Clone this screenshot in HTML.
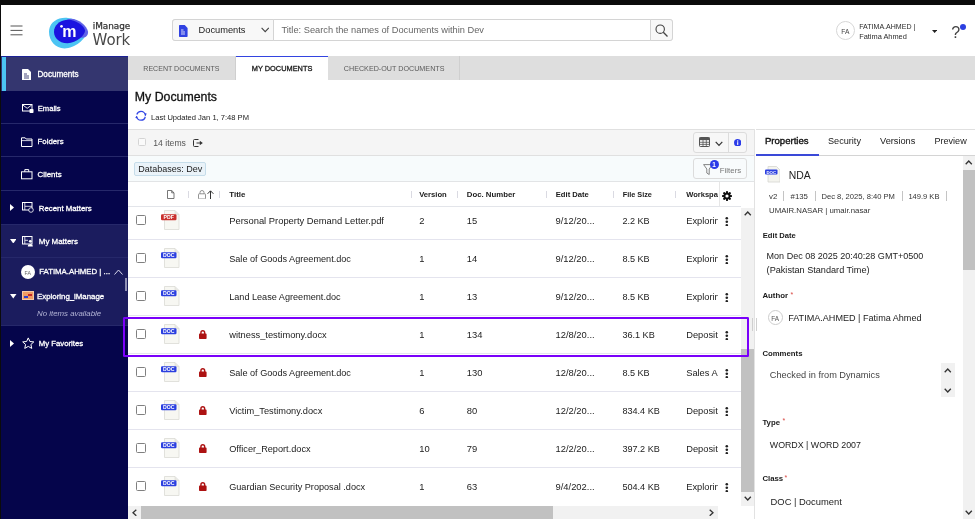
<!DOCTYPE html>
<html lang="en">
<head>
<meta charset="utf-8">
<title>iManage Work - My Documents</title>
<style>
*{box-sizing:border-box;margin:0;padding:0}
html,body{width:975px;height:519px;overflow:hidden;background:#fff;font-family:"Liberation Sans","DejaVu Sans",sans-serif;color:#222;font-size:9px}
.a{position:absolute}
.t{position:absolute;white-space:nowrap;line-height:14px;height:14px}
.sb{-webkit-text-stroke:.3px #fff}
.sk{-webkit-text-stroke:.3px #222}
.cb{position:absolute;left:136px;width:10px;height:10px;border:1px solid #808080;border-radius:1.5px;background:#fff}
.hl{position:absolute;left:128px;width:613px;height:1px;background:#e4e4ee}
</style>
</head>
<body>
<div id="app" style="position:absolute;left:0;top:0;width:975px;height:519px;will-change:transform">
<div class="a" style="left:0px;top:0px;width:975px;height:4.7px;background:#0b0b0b"></div>
<svg class="a" style="left:10px;top:25px" width="13" height="11" viewBox="0 0 13 11"><path d="M.5 1H12.500M.5 5.400H12.500M.5 9.800H12.500" stroke="#555" stroke-width="1" fill="none"/></svg>
<svg class="a" style="left:48px;top:16px" width="42" height="34" viewBox="0 0 42 34"><path d="M1.200 13.500C2.500 5.500 11 .8 20 2C28 3 37.500 8.500 38.500 15C39.500 22 27 32.500 16.500 32.500C6.500 32.500 -.2 23 1.200 13.500Z" fill="#4cc4f3"/>
<path d="M19 3.500C27 0 39 9 40 15.500C40.600 19.500 37 22.500 33 21.500Z" fill="#5f62e8"/>
<path d="M6.300 13.200C8.300 6.200 16 2.400 24 4.200C30.500 5.800 36.600 10.500 37 14.600C37.400 19 28.500 27.300 19.500 27.300C10.500 27.300 4.500 20.500 6.300 13.200Z" fill="#1b14e0"/>
<text x="14.300" y="21" font-family="Liberation Sans, sans-serif" font-weight="bold" font-size="16" fill="#fff">m</text>
<circle cx="13.500" cy="10.300" r="1.350" fill="#fff"/></svg>
<div class="t" style="left:92.800px;top:19px;font-size:8.900px;color:#333;font-family:'DejaVu Sans','Liberation Sans',sans-serif;-webkit-text-stroke:.25px #333;letter-spacing:-.05px">iManage</div>
<div class="t" style="left:92.600px;top:30px;height:20px;line-height:20px;font-size:15px;color:#474747;font-family:'DejaVu Sans','Liberation Sans',sans-serif;letter-spacing:-.15px">Work</div>
<div class="a" style="left:172px;top:19px;width:501px;height:22px;border:1px solid #d4d4d4;border-radius:3px;background:#fff"></div>
<div class="a" style="left:172px;top:19px;width:102px;height:22px;border:1px solid #d4d4d4;border-radius:3px 0 0 3px;background:#f8f8f8"></div>
<svg class="a" style="left:179.2px;top:25px" width="8.6" height="12" viewBox="0 0 8.6 12"><path d="M0 1C0 .4.4 0 1 0H5.700L8.600 2.900V11C8.600 11.600 8.200 12 7.600 12H1C.4 12 0 11.600 0 11Z" fill="#3142e2"/><path d="M2 5H4.500M2 7H6M2 9H6" stroke="#fff" stroke-width=".8"/></svg>
<div class="t " style="left:198.5px;top:23px;font-size:9.3px;color:#222;">Documents</div>
<svg class="a" style="left:260.8px;top:27.4px" width="8.4" height="5.6" viewBox="0 0 8.400 5.600"><path d="M.6 .8L4.200 4.600L7.800 .8" stroke="#444" stroke-width="1.100" fill="none"/></svg>
<div class="t " style="left:281.4px;top:23px;font-size:9.27px;color:#666;">Title: Search the names of Documents within Dev</div>
<div class="a" style="left:650px;top:19px;width:23px;height:22px;border:1px solid #d4d4d4;border-radius:0 3px 3px 0;background:#f8f8f8"></div>
<svg class="a" style="left:655px;top:24px" width="13" height="13" viewBox="0 0 13 13"><circle cx="5.200" cy="5.200" r="4.200" stroke="#444" stroke-width="1.100" fill="none"/><path d="M8.300 8.300L12.500 12.500" stroke="#444" stroke-width="1.300"/></svg>
<div class="a" style="left:835.7px;top:20.5px;width:19.8px;height:19.8px;border:1px solid #d6d6d6;border-radius:50%"></div>
<div class="t " style="left:841.3px;top:25px;font-size:6.6px;color:#444;">FA</div>
<div class="t " style="left:859.2px;top:20px;font-size:7.05px;color:#2a2a2a;">FATIMA.AHMED |</div>
<div class="t " style="left:859.2px;top:30px;font-size:7.4px;color:#2a2a2a;">Fatima Ahmed</div>
<svg class="a" style="left:931.8px;top:30.2px" width="5.2" height="3" viewBox="0 0 5.200 3"><path d="M0 0H5.200L2.600 3Z" fill="#222"/></svg>
<div class="t" style="left:951.200px;top:23px;height:20px;line-height:20px;font-size:16px;color:#444">?</div>
<div class="a" style="left:960px;top:24px;width:6px;height:6px;border-radius:50%;background:#2b3fe0"></div>
<div class="a" style="left:0px;top:56px;width:128px;height:463px;background:#05054b"></div>
<div class="a" style="left:0px;top:55.5px;width:128px;height:1.5px;background:#1c2296"></div>
<div class="a" style="left:0px;top:57px;width:128px;height:33.5px;background:#34366f"></div>
<div class="a" style="left:1.5px;top:57px;width:4px;height:33.5px;background:#4cc4f2"></div>
<div class="a" style="left:0px;top:223.5px;width:128px;height:101px;background:#1b1c5e"></div>
<div class="a" style="left:0px;top:122.8px;width:128px;height:1px;background:#26286a"></div>
<div class="a" style="left:0px;top:156px;width:128px;height:1px;background:#26286a"></div>
<div class="a" style="left:0px;top:190px;width:128px;height:1px;background:#26286a"></div>
<div class="a" style="left:0px;top:223.5px;width:128px;height:1px;background:#26286a"></div>
<div class="a" style="left:0px;top:257px;width:128px;height:1px;background:#26286a"></div>
<div class="a" style="left:0px;top:324.5px;width:128px;height:1px;background:#26286a"></div>
<div class="a" style="left:0px;top:0px;width:1.2px;height:519px;background:#0b0b0b"></div>
<svg class="a" style="left:21.5px;top:68.5px" width="9" height="11.5" viewBox="0 0 9 11.500"><path d="M0 1C0 .4.4 0 1 0H6L9 3V10.500C9 11.100 8.600 11.500 8 11.500H1C.4 11.500 0 11.100 0 10.500Z" fill="#fff"/><path d="M2 5H5M2 7H7M2 9H7" stroke="#34366f" stroke-width=".9"/></svg>
<div class="t sb" style="left:37.5px;top:68px;font-size:8.15px;color:#fff;">Documents</div>
<svg class="a" style="left:22px;top:104px" width="12" height="9" viewBox="0 0 12 9"><rect x=".5" y=".5" width="9.500" height="6.500" fill="none" stroke="#fff" stroke-width="1"/><path d="M.8 1L5.200 4.300L9.700 1" stroke="#fff" stroke-width=".9" fill="none"/><rect x="7.500" y="5" width="4" height="4" rx=".8" fill="#fff"/></svg>
<div class="t sb" style="left:37.8px;top:102px;font-size:7.6px;color:#fff;">Emails</div>
<svg class="a" style="left:21px;top:136.5px" width="12" height="10" viewBox="0 0 12 10"><path d="M.5 .8H4.200L5.200 2H11V9.500H.5Z" fill="none" stroke="#fff" stroke-width="1" stroke-linejoin="round"/><path d="M.5 3.600H11" stroke="#fff" stroke-width=".8"/></svg>
<div class="t sb" style="left:37.6px;top:135px;font-size:7.8px;color:#fff;">Folders</div>
<svg class="a" style="left:21px;top:169px" width="12" height="10.5" viewBox="0 0 12 10.5"><rect x=".5" y="2.800" width="10.500" height="7" fill="none" stroke="#fff" stroke-width="1"/><path d="M3.800 2.800V.6H7.700V2.800" fill="none" stroke="#fff" stroke-width="1"/></svg>
<div class="t sb" style="left:37.6px;top:168px;font-size:7.85px;color:#fff;">Clients</div>
<svg class="a" style="left:10.4px;top:204px" width="4" height="7" viewBox="0 0 4 7"><path d="M0 0L4 3.500L0 7Z" fill="#fff"/></svg>
<svg class="a" style="left:21.8px;top:201.5px" width="12" height="11" viewBox="0 0 12 11"><rect x=".5" y=".5" width="9.500" height="7.500" fill="none" stroke="#fff" stroke-width="1"/><path d="M2.800 .5V8M2.800 4.300H10" stroke="#fff" stroke-width=".8"/><circle cx="9" cy="8" r="2.300" fill="#05054b" stroke="#fff" stroke-width=".8"/></svg>
<div class="t sb" style="left:38.8px;top:202px;font-size:7.82px;color:#fff;">Recent Matters</div>
<svg class="a" style="left:9.5px;top:238.5px" width="6.5" height="4.5" viewBox="0 0 6.500 4.500"><path d="M0 0H6.500L3.250 4.500Z" fill="#fff"/></svg>
<svg class="a" style="left:21.8px;top:235.5px" width="12" height="11" viewBox="0 0 12 11"><rect x=".5" y=".5" width="9.500" height="7.500" fill="none" stroke="#fff" stroke-width="1"/><path d="M2.800 .5V8M2.800 4.300H6" stroke="#fff" stroke-width=".8"/><circle cx="8.300" cy="5.300" r="1.400" fill="#fff"/><path d="M5.800 10.500C5.800 7.300 10.800 7.300 10.800 10.500Z" fill="#fff"/></svg>
<div class="t sb" style="left:38.8px;top:235px;font-size:7.93px;color:#fff;">My Matters</div>
<div class="a" style="left:20.8px;top:265px;width:14px;height:14px;border-radius:50%;background:#fff"></div>
<div class="t " style="left:24.6px;top:266px;font-size:5.2px;color:#666;">FA</div>
<div class="t sb" style="left:39.2px;top:265px;font-size:7.82px;color:#fff;">FATIMA.AHMED | ...</div>
<svg class="a" style="left:113.5px;top:268.5px" width="9" height="6" viewBox="0 0 9 6"><path d="M.5 5.500L4.500 1L8.500 5.500" stroke="#d8d8ee" stroke-width="1" fill="none"/></svg>
<div class="a" style="left:124.8px;top:277.5px;width:2.2px;height:13px;background:#8f90b4"></div>
<svg class="a" style="left:10px;top:294px" width="6.5" height="4.5" viewBox="0 0 6.500 4.500"><path d="M0 0H6.500L3.250 4.500Z" fill="#fff"/></svg>
<div class="a" style="left:21.8px;top:291px;width:11.8px;height:9.3px;background:#ee9b63;border:1px solid #f6c9a4"></div>
<div class="a" style="left:24px;top:295.5px;width:3.5px;height:2.5px;background:#2a3fd0"></div>
<div class="a" style="left:27.5px;top:294px;width:4px;height:2px;background:#c62828"></div>
<div class="t sb" style="left:37.1px;top:290px;font-size:7.83px;color:#fff;">Exploring_iManage</div>
<div class="t " style="left:37.1px;top:307px;font-size:7.85px;color:#b4b5d6;font-style:italic">No items available</div>
<svg class="a" style="left:10.4px;top:339.5px" width="4" height="7" viewBox="0 0 4 7"><path d="M0 0L4 3.500L0 7Z" fill="#fff"/></svg>
<svg class="a" style="left:21.5px;top:336.5px" width="12.5" height="12.5" viewBox="0 0 12.500 12.500"><path d="M6.250 .9L7.900 4.500L11.800 4.900L8.900 7.500L9.750 11.400L6.250 9.400L2.750 11.400L3.600 7.500L.7 4.900L4.600 4.500Z" fill="none" stroke="#fff" stroke-width="1" stroke-linejoin="round"/></svg>
<div class="t sb" style="left:38.8px;top:337px;font-size:7.76px;color:#fff;">My Favorites</div>
<div class="a" style="left:128px;top:55.5px;width:847px;height:24.5px;background:#dedede"></div>
<div class="a" style="left:235px;top:56px;width:1px;height:24px;background:#cfcfcf"></div>
<div class="a" style="left:459px;top:56px;width:1px;height:24px;background:#cfcfcf"></div>
<div class="a" style="left:235.5px;top:55.5px;width:92.5px;height:25px;background:#fff;border-top:1.700px solid #3344e0"></div>
<div class="t " style="left:143.3px;top:62px;font-size:7.06px;color:#5a5a5a;">RECENT DOCUMENTS</div>
<div class="t sk" style="left:251.8px;top:62px;font-size:7.39px;color:#111;">MY DOCUMENTS</div>
<div class="t " style="left:343.8px;top:62px;font-size:7.18px;color:#5a5a5a;">CHECKED-OUT DOCUMENTS</div>
<div class="t " style="left:134.8px;top:90px;font-size:12.34px;color:#111;-webkit-text-stroke:.3px #111">My Documents</div>
<svg class="a" style="left:135px;top:110px" width="12" height="12" viewBox="0 0 12 12"><circle cx="6" cy="5.800" r="4.400" fill="none" stroke="#3347e6" stroke-width="1.200" stroke-dasharray="12 1.820" stroke-dashoffset="-1"/><path d="M9.200 3.300L11.700 3.600L10.600 5.900Z M2.800 8.300L.3 8L1.400 5.700Z" fill="#2b3fe0"/></svg>
<div class="t " style="left:151px;top:111px;font-size:7.57px;color:#222;">Last Updated Jan 1, 7:48 PM</div>
<div class="a" style="left:128px;top:128.5px;width:627px;height:27.5px;background:#f5f5f5;border-top:1px solid #e0e0e0;border-bottom:1px solid #e0e0e0"></div>
<div class="a" style="left:138px;top:138px;width:8px;height:8px;border:1px solid #d4d4d4;border-radius:1.500px;background:#fafafa"></div>
<div class="t " style="left:153.3px;top:136px;font-size:8.65px;color:#555;">14 items</div>
<svg class="a" style="left:193px;top:139px" width="10" height="8" viewBox="0 0 10 8"><path d="M5.500 .5H1.500Q.5 .5 .5 1.500V6.500Q.5 7.500 1.500 7.500H5.500" stroke="#333" stroke-width="1" fill="none"/><path d="M3.500 4H8" stroke="#333" stroke-width="1"/><path d="M6.800 1.800L9.800 4L6.800 6.200Z" fill="#333"/></svg>
<div class="a" style="left:693px;top:131.6px;width:54px;height:21.6px;border:1px solid #dcdcdc;border-radius:3px;background:#f7f7f7"></div>
<div class="a" style="left:728px;top:132.5px;width:1px;height:20px;background:#dcdcdc"></div>
<svg class="a" style="left:699px;top:137.3px" width="11" height="10" viewBox="0 0 11 10"><rect x=".5" y=".5" width="10" height="9" rx=".8" fill="none" stroke="#555" stroke-width="1"/><rect x=".5" y=".5" width="10" height="2.600" fill="#555"/><path d="M.5 5.300H10.500M.5 7.400H10.500M4 3V9.500M7.300 3V9.500" stroke="#555" stroke-width=".8"/></svg>
<svg class="a" style="left:714.6px;top:141px" width="8" height="5.5" viewBox="0 0 8 5.500"><path d="M.7 .8L4 4.300L7.300 .8" stroke="#333" stroke-width="1.200" fill="none"/></svg>
<svg class="a" style="left:733.6px;top:138.5px" width="7.4" height="7.4" viewBox="0 0 7.400 7.400"><circle cx="3.700" cy="3.700" r="3.700" fill="#2b3be8"/><rect x="3.150" y="3.200" width="1.100" height="2.700" fill="#fff"/><circle cx="3.700" cy="2" r=".7" fill="#fff"/></svg>
<div class="a" style="left:128px;top:156px;width:627px;height:25.5px;background:#f7fbfc;border-bottom:1px solid #e2e4e6"></div>
<div class="a" style="left:134.3px;top:161.7px;width:71.4px;height:14.3px;border:1px solid #c6ddea;border-radius:2px;background:#eaf3f9"></div>
<div class="t " style="left:138.3px;top:162px;font-size:9px;color:#222;">Databases: Dev</div>
<div class="a" style="left:693px;top:157.6px;width:54px;height:21.4px;border:1px solid #dcdcdc;border-radius:3px;background:#f8fbfc"></div>
<svg class="a" style="left:702.5px;top:164px" width="10" height="11.5" viewBox="0 0 10 11.500"><path d="M.6 .6H9.400L6.200 5V10.500L3.800 9V5Z" fill="none" stroke="#777" stroke-width=".9" stroke-linejoin="round"/></svg>
<div class="a" style="left:709.5px;top:159.6px;width:9px;height:9px;border-radius:50%;background:#2b3be8"></div>
<div class="t " style="left:712.3px;top:158px;font-size:6.5px;color:#fff;font-weight:bold">1</div>
<div class="t " style="left:719.8px;top:164px;font-size:7.86px;color:#777;">Filters</div>
<div class="a" style="left:128px;top:205.7px;width:613px;height:1.8px;background:#e3e5ea"></div>
<svg class="a" style="left:167px;top:190px" width="7.5" height="9" viewBox="0 0 7.500 9"><path d="M.5 .5H4.700L7 2.800V8.500H.5Z M4.700 .5V2.800H7" fill="none" stroke="#555" stroke-width=".8"/></svg>
<svg class="a" style="left:198.3px;top:189.5px" width="8" height="9.5" viewBox="0 0 8 9.500"><rect x=".5" y="3.800" width="7" height="5.200" rx=".6" fill="none" stroke="#888" stroke-width=".9"/><path d="M2 3.800V2.500Q2 .5 4 .5Q6 .5 6 2.500V3.800" fill="none" stroke="#888" stroke-width=".9"/></svg>
<svg class="a" style="left:207px;top:189.5px" width="7" height="9.5" viewBox="0 0 7 9.500"><path d="M3.500 1V9.500M.6 3.800L3.500 .8L6.400 3.800" stroke="#333" stroke-width="1" fill="none"/></svg>
<div class="a" style="left:187.6px;top:191px;width:1px;height:7px;background:#dadae2"></div>
<div class="a" style="left:219.4px;top:191px;width:1px;height:7px;background:#dadae2"></div>
<div class="a" style="left:410.5px;top:191px;width:1px;height:7px;background:#dadae2"></div>
<div class="a" style="left:457px;top:191px;width:1px;height:7px;background:#dadae2"></div>
<div class="a" style="left:546px;top:191px;width:1px;height:7px;background:#dadae2"></div>
<div class="a" style="left:612.5px;top:191px;width:1px;height:7px;background:#dadae2"></div>
<div class="a" style="left:675px;top:191px;width:1px;height:7px;background:#dadae2"></div>
<div class="t " style="left:229.3px;top:188px;font-size:7.9px;color:#1a1a1a;font-weight:bold">Title</div>
<div class="t " style="left:419.2px;top:188px;font-size:7.64px;color:#1a1a1a;font-weight:bold">Version</div>
<div class="t " style="left:466.8px;top:188px;font-size:7.8px;color:#1a1a1a;font-weight:bold">Doc. Number</div>
<div class="t " style="left:555.8px;top:188px;font-size:7.61px;color:#1a1a1a;font-weight:bold">Edit Date</div>
<div class="t " style="left:622.7px;top:188px;font-size:7.3px;color:#1a1a1a;font-weight:bold">File Size</div>
<div class="t" style="left:686.200px;top:188px;font-size:7.550px;font-weight:bold;color:#1a1a1a;width:31.900px;overflow:hidden">Workspace</div>
<svg class="a" style="left:722.4px;top:190.6px" width="10" height="10" viewBox="0 0 10 10"><g fill="#111"><circle cx="5" cy="5" r="3.500"/><rect x="4" y="0" width="2" height="10" rx=".4"/><rect x="0" y="4" width="10" height="2" rx=".4"/><rect x="4" y="0" width="2" height="10" rx=".4" transform="rotate(45 5 5)"/><rect x="4" y="0" width="2" height="10" rx=".4" transform="rotate(-45 5 5)"/></g><circle cx="5" cy="5" r="1.600" fill="#fff"/></svg>
<div class="a" style="left:718.8px;top:182px;width:1px;height:24px;background:#e6e6e6"></div>
<div class="hl" style="top:239.0px"></div>
<div class="cb" style="top:215.0px"></div>
<svg class="a" style="left:161px;top:209.8px" width="18.5" height="20" viewBox="0 0 18.500 20"><path d="M3.500 .5H14L18 4.500V19.500H3.500Z" fill="#f7f7f2" stroke="#dadad4" stroke-width=".8"/><path d="M14 .5V4.500H18" fill="#e9e9e3" stroke="#dadad4" stroke-width=".6"/><rect x="0" y="4.300" width="15.500" height="6" rx="1.200" fill="#c9302c"/><text x="7.750" y="9.100" text-anchor="middle" font-family="Liberation Sans, sans-serif" font-weight="bold" font-size="5.200" fill="#fff">PDF</text></svg>
<div class="t " style="left:229.2px;top:214px;font-size:9.39px;color:#222;">Personal Property Demand Letter.pdf</div>
<div class="t " style="left:419.2px;top:214px;font-size:9.4px;color:#222;">2</div>
<div class="t " style="left:466.8px;top:214px;font-size:9.4px;color:#222;">15</div>
<div class="t " style="left:555.5px;top:214px;font-size:9.4px;color:#222;">9/12/20...</div>
<div class="t " style="left:622.4px;top:214px;font-size:9.1px;color:#222;">2.2 KB</div>
<div class="t" style="left:686.200px;top:213.5px;font-size:9.300px;width:31.600px;overflow:hidden">Explorin</div>
<svg class="a" style="left:725px;top:216.5px" width="3.6" height="9.6" viewBox="0 0 3.600 9.600"><circle cx="1.800" cy="1.300" r="1.300" fill="#222"/><circle cx="1.800" cy="4.800" r="1.300" fill="#222"/><circle cx="1.800" cy="8.300" r="1.300" fill="#222"/></svg>
<div class="hl" style="top:277.0px"></div>
<div class="cb" style="top:253.0px"></div>
<svg class="a" style="left:161px;top:247.8px" width="18.5" height="20" viewBox="0 0 18.500 20"><path d="M3.500 .5H14L18 4.500V19.500H3.500Z" fill="#f7f7f2" stroke="#dadad4" stroke-width=".8"/><path d="M14 .5V4.500H18" fill="#e9e9e3" stroke="#dadad4" stroke-width=".6"/><rect x="0" y="4.300" width="15.500" height="6" rx="1.200" fill="#2b3fe0"/><text x="7.750" y="9.100" text-anchor="middle" font-family="Liberation Sans, sans-serif" font-weight="bold" font-size="5.200" fill="#fff">DOC</text></svg>
<div class="t " style="left:229.2px;top:252px;font-size:9.13px;color:#222;">Sale of Goods Agreement.doc</div>
<div class="t " style="left:419.2px;top:252px;font-size:9.4px;color:#222;">1</div>
<div class="t " style="left:466.8px;top:252px;font-size:9.4px;color:#222;">14</div>
<div class="t " style="left:555.5px;top:252px;font-size:9.4px;color:#222;">9/12/20...</div>
<div class="t " style="left:622.4px;top:252px;font-size:9.1px;color:#222;">8.5 KB</div>
<div class="t" style="left:686.200px;top:251.5px;font-size:9.300px;width:31.600px;overflow:hidden">Explorin</div>
<svg class="a" style="left:725px;top:254.5px" width="3.6" height="9.6" viewBox="0 0 3.600 9.600"><circle cx="1.800" cy="1.300" r="1.300" fill="#222"/><circle cx="1.800" cy="4.800" r="1.300" fill="#222"/><circle cx="1.800" cy="8.300" r="1.300" fill="#222"/></svg>
<div class="hl" style="top:315.0px"></div>
<div class="cb" style="top:291.0px"></div>
<svg class="a" style="left:161px;top:285.8px" width="18.5" height="20" viewBox="0 0 18.500 20"><path d="M3.500 .5H14L18 4.500V19.500H3.500Z" fill="#f7f7f2" stroke="#dadad4" stroke-width=".8"/><path d="M14 .5V4.500H18" fill="#e9e9e3" stroke="#dadad4" stroke-width=".6"/><rect x="0" y="4.300" width="15.500" height="6" rx="1.200" fill="#2b3fe0"/><text x="7.750" y="9.100" text-anchor="middle" font-family="Liberation Sans, sans-serif" font-weight="bold" font-size="5.200" fill="#fff">DOC</text></svg>
<div class="t " style="left:229.2px;top:290px;font-size:9.12px;color:#222;">Land Lease Agreement.doc</div>
<div class="t " style="left:419.2px;top:290px;font-size:9.4px;color:#222;">1</div>
<div class="t " style="left:466.8px;top:290px;font-size:9.4px;color:#222;">13</div>
<div class="t " style="left:555.5px;top:290px;font-size:9.4px;color:#222;">9/12/20...</div>
<div class="t " style="left:622.4px;top:290px;font-size:9.1px;color:#222;">8.5 KB</div>
<div class="t" style="left:686.200px;top:289.5px;font-size:9.300px;width:31.600px;overflow:hidden">Explorin</div>
<svg class="a" style="left:725px;top:292.5px" width="3.6" height="9.6" viewBox="0 0 3.600 9.600"><circle cx="1.800" cy="1.300" r="1.300" fill="#222"/><circle cx="1.800" cy="4.800" r="1.300" fill="#222"/><circle cx="1.800" cy="8.300" r="1.300" fill="#222"/></svg>
<div class="hl" style="top:353.0px"></div>
<div class="cb" style="top:329.0px"></div>
<svg class="a" style="left:161px;top:323.8px" width="18.5" height="20" viewBox="0 0 18.500 20"><path d="M3.500 .5H14L18 4.500V19.500H3.500Z" fill="#f7f7f2" stroke="#dadad4" stroke-width=".8"/><path d="M14 .5V4.500H18" fill="#e9e9e3" stroke="#dadad4" stroke-width=".6"/><rect x="0" y="4.300" width="15.500" height="6" rx="1.200" fill="#2b3fe0"/><text x="7.750" y="9.100" text-anchor="middle" font-family="Liberation Sans, sans-serif" font-weight="bold" font-size="5.200" fill="#fff">DOC</text></svg>
<svg class="a" style="left:199px;top:329.5px" width="7.6" height="9" viewBox="0 0 7.600 9"><rect x="0" y="3.600" width="7.600" height="5.400" rx=".8" fill="#ad1212"/><path d="M1.900 4V2.900Q1.900 .8 3.800 .8Q5.700 .8 5.700 2.900V4" fill="none" stroke="#ad1212" stroke-width="1.400"/></svg>
<div class="t " style="left:229.2px;top:328px;font-size:9.3px;color:#222;">witness_testimony.docx</div>
<div class="t " style="left:419.2px;top:328px;font-size:9.4px;color:#222;">1</div>
<div class="t " style="left:466.8px;top:328px;font-size:9.4px;color:#222;">134</div>
<div class="t " style="left:555.5px;top:328px;font-size:9.4px;color:#222;">12/8/20...</div>
<div class="t " style="left:622.4px;top:328px;font-size:9.1px;color:#222;">36.1 KB</div>
<div class="t" style="left:686.200px;top:327.5px;font-size:9.300px;width:31.600px;overflow:hidden">Deposit</div>
<svg class="a" style="left:725px;top:330.5px" width="3.6" height="9.6" viewBox="0 0 3.600 9.600"><circle cx="1.800" cy="1.300" r="1.300" fill="#222"/><circle cx="1.800" cy="4.800" r="1.300" fill="#222"/><circle cx="1.800" cy="8.300" r="1.300" fill="#222"/></svg>
<div class="hl" style="top:391.0px"></div>
<div class="cb" style="top:367.0px"></div>
<svg class="a" style="left:161px;top:361.8px" width="18.5" height="20" viewBox="0 0 18.500 20"><path d="M3.500 .5H14L18 4.500V19.500H3.500Z" fill="#f7f7f2" stroke="#dadad4" stroke-width=".8"/><path d="M14 .5V4.500H18" fill="#e9e9e3" stroke="#dadad4" stroke-width=".6"/><rect x="0" y="4.300" width="15.500" height="6" rx="1.200" fill="#2b3fe0"/><text x="7.750" y="9.100" text-anchor="middle" font-family="Liberation Sans, sans-serif" font-weight="bold" font-size="5.200" fill="#fff">DOC</text></svg>
<svg class="a" style="left:199px;top:367.5px" width="7.6" height="9" viewBox="0 0 7.600 9"><rect x="0" y="3.600" width="7.600" height="5.400" rx=".8" fill="#ad1212"/><path d="M1.900 4V2.900Q1.900 .8 3.800 .8Q5.700 .8 5.700 2.900V4" fill="none" stroke="#ad1212" stroke-width="1.400"/></svg>
<div class="t " style="left:229.2px;top:366px;font-size:9.13px;color:#222;">Sale of Goods Agreement.doc</div>
<div class="t " style="left:419.2px;top:366px;font-size:9.4px;color:#222;">1</div>
<div class="t " style="left:466.8px;top:366px;font-size:9.4px;color:#222;">130</div>
<div class="t " style="left:555.5px;top:366px;font-size:9.4px;color:#222;">12/8/20...</div>
<div class="t " style="left:622.4px;top:366px;font-size:9.1px;color:#222;">8.5 KB</div>
<div class="t" style="left:686.200px;top:365.5px;font-size:9.300px;width:31.600px;overflow:hidden">Sales Ag</div>
<svg class="a" style="left:725px;top:368.5px" width="3.6" height="9.6" viewBox="0 0 3.600 9.600"><circle cx="1.800" cy="1.300" r="1.300" fill="#222"/><circle cx="1.800" cy="4.800" r="1.300" fill="#222"/><circle cx="1.800" cy="8.300" r="1.300" fill="#222"/></svg>
<div class="hl" style="top:429.0px"></div>
<div class="cb" style="top:405.0px"></div>
<svg class="a" style="left:161px;top:399.8px" width="18.5" height="20" viewBox="0 0 18.500 20"><path d="M3.500 .5H14L18 4.500V19.500H3.500Z" fill="#f7f7f2" stroke="#dadad4" stroke-width=".8"/><path d="M14 .5V4.500H18" fill="#e9e9e3" stroke="#dadad4" stroke-width=".6"/><rect x="0" y="4.300" width="15.500" height="6" rx="1.200" fill="#2b3fe0"/><text x="7.750" y="9.100" text-anchor="middle" font-family="Liberation Sans, sans-serif" font-weight="bold" font-size="5.200" fill="#fff">DOC</text></svg>
<svg class="a" style="left:199px;top:405.5px" width="7.6" height="9" viewBox="0 0 7.600 9"><rect x="0" y="3.600" width="7.600" height="5.400" rx=".8" fill="#ad1212"/><path d="M1.900 4V2.900Q1.900 .8 3.800 .8Q5.700 .8 5.700 2.900V4" fill="none" stroke="#ad1212" stroke-width="1.400"/></svg>
<div class="t " style="left:229.2px;top:404px;font-size:9.24px;color:#222;">Victim_Testimony.docx</div>
<div class="t " style="left:419.2px;top:404px;font-size:9.4px;color:#222;">6</div>
<div class="t " style="left:466.8px;top:404px;font-size:9.4px;color:#222;">80</div>
<div class="t " style="left:555.5px;top:404px;font-size:9.4px;color:#222;">12/2/20...</div>
<div class="t " style="left:622.4px;top:404px;font-size:9.1px;color:#222;">834.4 KB</div>
<div class="t" style="left:686.200px;top:403.5px;font-size:9.300px;width:31.600px;overflow:hidden">Deposit</div>
<svg class="a" style="left:725px;top:406.5px" width="3.6" height="9.6" viewBox="0 0 3.600 9.600"><circle cx="1.800" cy="1.300" r="1.300" fill="#222"/><circle cx="1.800" cy="4.800" r="1.300" fill="#222"/><circle cx="1.800" cy="8.300" r="1.300" fill="#222"/></svg>
<div class="hl" style="top:467.0px"></div>
<div class="cb" style="top:443.0px"></div>
<svg class="a" style="left:161px;top:437.8px" width="18.5" height="20" viewBox="0 0 18.500 20"><path d="M3.500 .5H14L18 4.500V19.500H3.500Z" fill="#f7f7f2" stroke="#dadad4" stroke-width=".8"/><path d="M14 .5V4.500H18" fill="#e9e9e3" stroke="#dadad4" stroke-width=".6"/><rect x="0" y="4.300" width="15.500" height="6" rx="1.200" fill="#2b3fe0"/><text x="7.750" y="9.100" text-anchor="middle" font-family="Liberation Sans, sans-serif" font-weight="bold" font-size="5.200" fill="#fff">DOC</text></svg>
<svg class="a" style="left:199px;top:443.5px" width="7.6" height="9" viewBox="0 0 7.600 9"><rect x="0" y="3.600" width="7.600" height="5.400" rx=".8" fill="#ad1212"/><path d="M1.900 4V2.900Q1.900 .8 3.800 .8Q5.700 .8 5.700 2.900V4" fill="none" stroke="#ad1212" stroke-width="1.400"/></svg>
<div class="t " style="left:229.2px;top:442px;font-size:9.18px;color:#222;">Officer_Report.docx</div>
<div class="t " style="left:419.2px;top:442px;font-size:9.4px;color:#222;">10</div>
<div class="t " style="left:466.8px;top:442px;font-size:9.4px;color:#222;">79</div>
<div class="t " style="left:555.5px;top:442px;font-size:9.4px;color:#222;">12/2/20...</div>
<div class="t " style="left:622.4px;top:442px;font-size:9.1px;color:#222;">397.2 KB</div>
<div class="t" style="left:686.200px;top:441.5px;font-size:9.300px;width:31.600px;overflow:hidden">Deposit</div>
<svg class="a" style="left:725px;top:444.5px" width="3.6" height="9.6" viewBox="0 0 3.600 9.600"><circle cx="1.800" cy="1.300" r="1.300" fill="#222"/><circle cx="1.800" cy="4.800" r="1.300" fill="#222"/><circle cx="1.800" cy="8.300" r="1.300" fill="#222"/></svg>
<div class="cb" style="top:481.0px"></div>
<svg class="a" style="left:161px;top:475.8px" width="18.5" height="20" viewBox="0 0 18.500 20"><path d="M3.500 .5H14L18 4.500V19.500H3.500Z" fill="#f7f7f2" stroke="#dadad4" stroke-width=".8"/><path d="M14 .5V4.500H18" fill="#e9e9e3" stroke="#dadad4" stroke-width=".6"/><rect x="0" y="4.300" width="15.500" height="6" rx="1.200" fill="#2b3fe0"/><text x="7.750" y="9.100" text-anchor="middle" font-family="Liberation Sans, sans-serif" font-weight="bold" font-size="5.200" fill="#fff">DOC</text></svg>
<svg class="a" style="left:199px;top:481.5px" width="7.6" height="9" viewBox="0 0 7.600 9"><rect x="0" y="3.600" width="7.600" height="5.400" rx=".8" fill="#ad1212"/><path d="M1.900 4V2.900Q1.900 .8 3.800 .8Q5.700 .8 5.700 2.900V4" fill="none" stroke="#ad1212" stroke-width="1.400"/></svg>
<div class="t " style="left:229.2px;top:480px;font-size:9.14px;color:#222;">Guardian Security Proposal .docx</div>
<div class="t " style="left:419.2px;top:480px;font-size:9.4px;color:#222;">1</div>
<div class="t " style="left:466.8px;top:480px;font-size:9.4px;color:#222;">63</div>
<div class="t " style="left:555.5px;top:480px;font-size:9.4px;color:#222;">9/4/202...</div>
<div class="t " style="left:622.4px;top:480px;font-size:9.1px;color:#222;">504.4 KB</div>
<div class="t" style="left:686.200px;top:479.5px;font-size:9.300px;width:31.600px;overflow:hidden">Explorin</div>
<svg class="a" style="left:725px;top:482.5px" width="3.6" height="9.6" viewBox="0 0 3.600 9.600"><circle cx="1.800" cy="1.300" r="1.300" fill="#222"/><circle cx="1.800" cy="4.800" r="1.300" fill="#222"/><circle cx="1.800" cy="8.300" r="1.300" fill="#222"/></svg>
<div class="a" style="left:740.8px;top:207.5px;width:13.4px;height:298px;background:#f1f1f1"></div>
<div class="a" style="left:740.8px;top:348.5px;width:13.4px;height:143.4px;background:#c1c1c1"></div>
<svg class="a" style="left:744px;top:211px" width="7.5" height="5" viewBox="0 0 7.500 5"><path d="M.7 4.300L3.750 1L6.800 4.300" stroke="#333" stroke-width="1.300" fill="none"/></svg>
<svg class="a" style="left:744px;top:496px" width="7.5" height="5" viewBox="0 0 7.500 5"><path d="M.7 .7L3.750 4L6.800 .7" stroke="#333" stroke-width="1.300" fill="none"/></svg>
<div class="a" style="left:128px;top:505.5px;width:589.5px;height:13.5px;background:#f1f1f1"></div>
<div class="a" style="left:141px;top:505.5px;width:411.5px;height:13.5px;background:#c1c1c1"></div>
<svg class="a" style="left:131.5px;top:508.5px" width="5" height="7.5" viewBox="0 0 5 7.500"><path d="M4.300 .7L1 3.750L4.300 6.800" stroke="#333" stroke-width="1.300" fill="none"/></svg>
<svg class="a" style="left:708.5px;top:508.5px" width="5" height="7.5" viewBox="0 0 5 7.500"><path d="M.7 .7L4 3.750L.7 6.800" stroke="#333" stroke-width="1.300" fill="none"/></svg>
<div class="a" style="left:754px;top:128.5px;width:1px;height:390.5px;background:#e2e2e2"></div>
<div class="a" style="left:755.5px;top:128.5px;width:219.5px;height:1px;background:#e0e0e0"></div>
<div class="a" style="left:755.5px;top:154.8px;width:219.5px;height:1px;background:#d4d4d4"></div>
<div class="a" style="left:755.5px;top:153.8px;width:63px;height:2px;background:#3a49d8"></div>
<div class="t " style="left:764.9px;top:134px;font-size:9.6px;color:#111;-webkit-text-stroke:.35px #111">Properties</div>
<div class="t " style="left:828px;top:134px;font-size:9.14px;color:#222;">Security</div>
<div class="t " style="left:880px;top:134px;font-size:9.23px;color:#222;">Versions</div>
<div class="t " style="left:934.5px;top:134px;font-size:9.05px;color:#222;">Preview</div>
<div class="a" style="left:962.5px;top:156px;width:12.5px;height:363px;background:#f1f1f1"></div>
<div class="a" style="left:962.5px;top:169.5px;width:12.5px;height:100.5px;background:#c1c1c1"></div>
<svg class="a" style="left:965px;top:159.5px" width="7.5" height="5" viewBox="0 0 7.500 5"><path d="M.7 4.300L3.750 1L6.800 4.300" stroke="#333" stroke-width="1.300" fill="none"/></svg>
<svg class="a" style="left:965px;top:510px" width="7.5" height="5" viewBox="0 0 7.500 5"><path d="M.7 .7L3.750 4L6.800 .7" stroke="#333" stroke-width="1.300" fill="none"/></svg>
<svg class="a" style="left:764.5px;top:166px" width="15.5" height="16.5" viewBox="0 0 15.500 16.500"><path d="M3 .5H11.500L15 4V16H3Z" fill="#f4f4ee" stroke="#d6d6d0" stroke-width=".8"/><rect x="0" y="3.500" width="12.500" height="5" rx="1" fill="#2b3fe0"/><text x="6.250" y="7.500" text-anchor="middle" font-family="Liberation Sans, sans-serif" font-weight="bold" font-size="4.300" fill="#fff">DOC</text></svg>
<div class="t " style="left:788.8px;top:169px;font-size:10.4px;color:#222;">NDA</div>
<div class="t " style="left:769px;top:190px;font-size:7.8px;color:#333;">v2</div>
<div class="t " style="left:790.6px;top:190px;font-size:7.8px;color:#333;">#135</div>
<div class="t " style="left:821.5px;top:190px;font-size:7.6px;color:#333;">Dec 8, 2025, 8:40 PM</div>
<div class="t " style="left:908.4px;top:190px;font-size:7.55px;color:#333;">149.9 KB</div>
<div class="a" style="left:783.3px;top:190.5px;width:1px;height:10.5px;background:#c4c4c4"></div>
<div class="a" style="left:814.8px;top:190.5px;width:1px;height:10.5px;background:#c4c4c4"></div>
<div class="a" style="left:901.5px;top:190.5px;width:1px;height:10.5px;background:#c4c4c4"></div>
<div class="a" style="left:945.8px;top:190.5px;width:1px;height:10.5px;background:#c4c4c4"></div>
<div class="t " style="left:769px;top:204px;font-size:7.8px;color:#333;">UMAIR.NASAR | umair.nasar</div>
<div class="t " style="left:762.8px;top:229px;font-size:7.61px;color:#1a1a1a;font-weight:bold">Edit Date</div>
<div class="t " style="left:766.6px;top:249px;font-size:9.03px;color:#222;">Mon Dec 08 2025 20:40:28 GMT+0500</div>
<div class="t " style="left:766.6px;top:263px;font-size:9.13px;color:#222;">(Pakistan Standard Time)</div>
<div class="t " style="left:762.4px;top:289px;font-size:7.87px;color:#1a1a1a;font-weight:bold">Author</div>
<div class="t " style="left:790.5px;top:288px;font-size:7px;color:#d9453f;">*</div>
<div class="a" style="left:768.4px;top:310.2px;width:15px;height:15px;border:1px solid #ccc;border-radius:50%"></div>
<div class="t " style="left:771.3px;top:312px;font-size:6.4px;color:#555;">FA</div>
<div class="t " style="left:788.2px;top:311px;font-size:9.09px;color:#222;">FATIMA.AHMED | Fatima Ahmed</div>
<div class="t " style="left:762.4px;top:347px;font-size:7.76px;color:#1a1a1a;font-weight:bold">Comments</div>
<div class="a" style="left:762.4px;top:362.8px;width:192.4px;height:34.5px;background:#fff"></div>
<div class="a" style="left:941px;top:362.8px;width:13.8px;height:34.5px;background:#f1f1f1"></div>
<svg class="a" style="left:944px;top:367.5px" width="7.5" height="5" viewBox="0 0 7.500 5"><path d="M.7 4.300L3.750 1L6.800 4.300" stroke="#333" stroke-width="1.300" fill="none"/></svg>
<svg class="a" style="left:944px;top:388px" width="7.5" height="5" viewBox="0 0 7.500 5"><path d="M.7 .7L3.750 4L6.800 .7" stroke="#333" stroke-width="1.300" fill="none"/></svg>
<div class="t " style="left:769.8px;top:368px;font-size:9.21px;color:#444;">Checked in from Dynamics</div>
<div class="t " style="left:762.4px;top:416px;font-size:7.8px;color:#1a1a1a;font-weight:bold">Type</div>
<div class="t " style="left:782.5px;top:414px;font-size:7px;color:#d9453f;">*</div>
<div class="t " style="left:769.8px;top:438px;font-size:8.83px;color:#222;">WORDX | WORD 2007</div>
<div class="t " style="left:762.4px;top:472px;font-size:7.8px;color:#1a1a1a;font-weight:bold">Class</div>
<div class="t " style="left:784.5px;top:471px;font-size:7px;color:#d9453f;">*</div>
<div class="t " style="left:770.6px;top:495px;font-size:9.4px;color:#222;">DOC | Document</div>
<div class="a" style="left:122.6px;top:316.8px;width:626.8px;height:40.4px;border:2.600px solid #7a00fa;border-radius:1.200px"></div>
<div class="a" style="left:752px;top:318px;width:1px;height:12.5px;background:#cfcfcf"></div>
<div class="a" style="left:755.8px;top:318px;width:1px;height:12.5px;background:#cfcfcf"></div>
</div>
</body>
</html>
